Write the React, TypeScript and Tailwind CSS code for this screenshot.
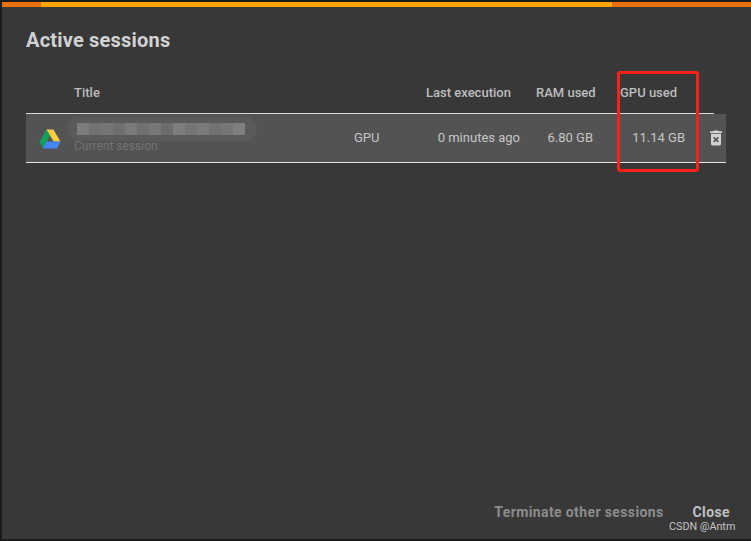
const mosaic = ["#7c7c7c", "#727272", "#757575", "#6e6e6e", "#7a7a7a", "#707070", "#777777", "#6c6c6c", "#7d7d7d", "#757575", "#7b7b7b", "#717171", "#767676", "#808080"];

const DriveLogo = () => (
  <svg width="22" height="20" viewBox="0 0 22 20" className="block">
    <polygon points="7.4,0.5 14.4,0.5 21.5,12.6 14.6,12.6" fill="#fdcd3f" />
    <polygon points="7.4,0.5 11,6.8 4,19.4 0.5,13" fill="#10a15d" />
    <polygon points="7.4,12.6 21.5,12.6 18,19.4 4,19.4" fill="#4285f4" />
  </svg>
);

const App = () => {
  return (
    <div className="relative h-[541px] w-[751px] overflow-hidden bg-[#1b1b1b] pl-[2px] pt-[2px] pb-[2px] font-['Roboto',sans-serif]">
      <div className="flex h-full flex-col bg-[#383838]">
        {/* Progress bar */}
        <div className="flex h-[5px] shrink-0">
          <div className="w-[39px] bg-[#e8710a]"></div>
          <div className="w-[571px] bg-[#ffa600]"></div>
          <div className="flex-1 bg-[#e8710a]"></div>
        </div>

        <div className="flex flex-1 flex-col pl-[24px]">
          <h1 className="mt-[21px] text-[20px] leading-[24px] font-bold tracking-[0.2px] text-[#d2d2d2]">Active sessions</h1>

          {/* Header */}
          <div className="mt-[21px] grid h-[41px] w-[688px] grid-cols-[48px_352px_110px_84px_94px] items-center border-b border-[#d8d8d8] pb-[1px] text-[13px] leading-[16px] font-medium text-[#bdbdbd]">
            <div></div>
            <div>Title</div>
            <div>Last execution</div>
            <div>RAM used</div>
            <div>GPU used</div>
          </div>

          {/* Session row */}
          <div className="grid h-[49px] w-[700px] grid-cols-[48px_280px_72px_94px_73px_92px_41px] items-center border-b border-[#e4e4e4] bg-[#535353] text-[13px] leading-[16px] text-[#c6c6c6]">
            <div className="pl-[13px] pt-[1px]">
              <DriveLogo />
            </div>
            <div className="relative h-full">
              <div className="absolute left-[-7px] top-[3px] h-[24px] w-[190px] rounded-full bg-[#5a5a5a]"></div>
              <div className="absolute left-[3px] top-[9px] flex h-[12px]">
                {mosaic.map((c, i) => (
                  <div key={i} className="h-full w-[12px]" style={{ backgroundColor: c }}></div>
                ))}
              </div>
              <div className="absolute left-0 top-[24px] text-[12px] leading-[16px] text-[#737373]">Current session</div>
            </div>
            <div className="pb-[1px]">GPU</div>
            <div className="pb-[1px] text-right">0 minutes ago</div>
            <div className="pb-[1px] text-right">6.80 GB</div>
            <div className="pb-[1px] text-right">11.14 GB</div>
            <div className="flex justify-end">
              <svg width="20" height="20" viewBox="0 0 24 24" fill="#d2d2d2" className="block">
                <path d="M6 19c0 1.1.9 2 2 2h8c1.1 0 2-.9 2-2V7H6v12zm2.46-7.12l1.41-1.41L12 12.59l2.12-2.12 1.41 1.41L13.41 14l2.12 2.12-1.41 1.41L12 15.41l-2.12 2.12-1.41-1.41L10.59 14l-2.13-2.12zM15.5 4l-1-1h-5l-1 1H5v2h14V4z" />
              </svg>
            </div>
          </div>

          {/* Actions */}
          <div className="mt-auto mb-[17px] flex items-center justify-end gap-[29px] pr-[21px] text-[14px] leading-[20px] font-bold tracking-[0.38px]">
            <span className="text-[#8c8c8c]">Terminate other sessions</span>
            <span className="text-[#c0c0c0]">Close</span>
          </div>
        </div>
      </div>

      {/* Annotation rectangle */}
      <div className="absolute left-[617px] top-[71px] h-[101px] w-[82px] rounded-[3px] border-[3px] border-[#fb2116]"></div>

      {/* Watermark */}
      <div className="absolute left-[669px] top-[520px] text-[10.75px] leading-[13px] text-[#c4c4c4]">CSDN @Antrn</div>
    </div>
  );
};

export default App;
